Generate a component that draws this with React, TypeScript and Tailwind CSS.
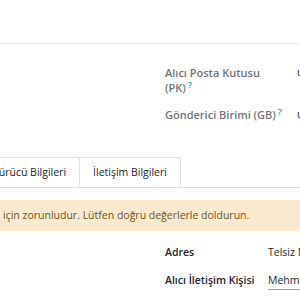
import React from "react";

const Help = () => <sup className="ml-[2px] text-[9px] font-semibold text-[#0d9bd8]">?</sup>;

export default function App() {
  return (
    <div className="w-[300px] h-[300px] overflow-hidden bg-white text-[10.5px] leading-[15px] text-[#212529]" style={{ fontFamily: '"Open Sans", sans-serif' }}>
      <div className="h-[43px]" />
      <div className="border-t border-[#e2e2e2]" />
      <div className="pt-[21px] flex flex-col gap-[12px]">
        <div className="flex">
          <div className="w-[165px] shrink-0" />
          <div className="w-[132px] shrink-0 pr-[22px] text-[11px] font-semibold text-[#727579]">
            Alıcı Posta Kutusu (PK)<Help />
          </div>
          <div className="min-w-0 flex-1 overflow-hidden whitespace-nowrap">urn:mail:pk</div>
        </div>
        <div className="flex">
          <div className="w-[165px] shrink-0" />
          <div className="w-[132px] shrink-0 text-[11px] font-semibold text-[#727579] whitespace-nowrap">
            Gönderici Birimi (GB)<Help />
          </div>
          <div className="min-w-0 flex-1 overflow-hidden whitespace-nowrap">urn:mail:gb</div>
        </div>
      </div>
      <div className="mt-[35px] flex border-b border-[#dee2e6] h-[31px]">
        <div className="-ml-[20px] flex">
          <div className="px-[13px] flex items-center border-t border-r border-[#dee2e6] whitespace-nowrap">Sürücü Bilgileri</div>
          <div className="px-[13px] flex items-center border-t border-r border-[#dee2e6] whitespace-nowrap">İletişim Bilgileri</div>
        </div>
      </div>
      <div className="mt-[12px] h-[31px] bg-[#fbe9cf] text-[#6e5316] flex items-center pl-[3px] whitespace-nowrap overflow-hidden">
        için zorunludur. Lütfen doğru değerlerle doldurun.
      </div>
      <div className="pt-[14px] flex flex-col gap-[13px]">
        <div className="flex">
          <div className="w-[165px] shrink-0" />
          <div className="w-[103px] shrink-0 font-semibold">Adres</div>
          <div className="min-w-0 flex-1 overflow-hidden whitespace-nowrap">Telsiz Mahallesi</div>
        </div>
        <div className="flex">
          <div className="w-[165px] shrink-0" />
          <div className="w-[103px] shrink-0 font-semibold whitespace-nowrap">Alıcı İletişim Kişisi</div>
          <div className="min-w-0 flex-1 overflow-hidden whitespace-nowrap border-b border-[#5cb8bb] pb-[1px]">Mehmet Yılmaz</div>
        </div>
      </div>
    </div>
  );
}
